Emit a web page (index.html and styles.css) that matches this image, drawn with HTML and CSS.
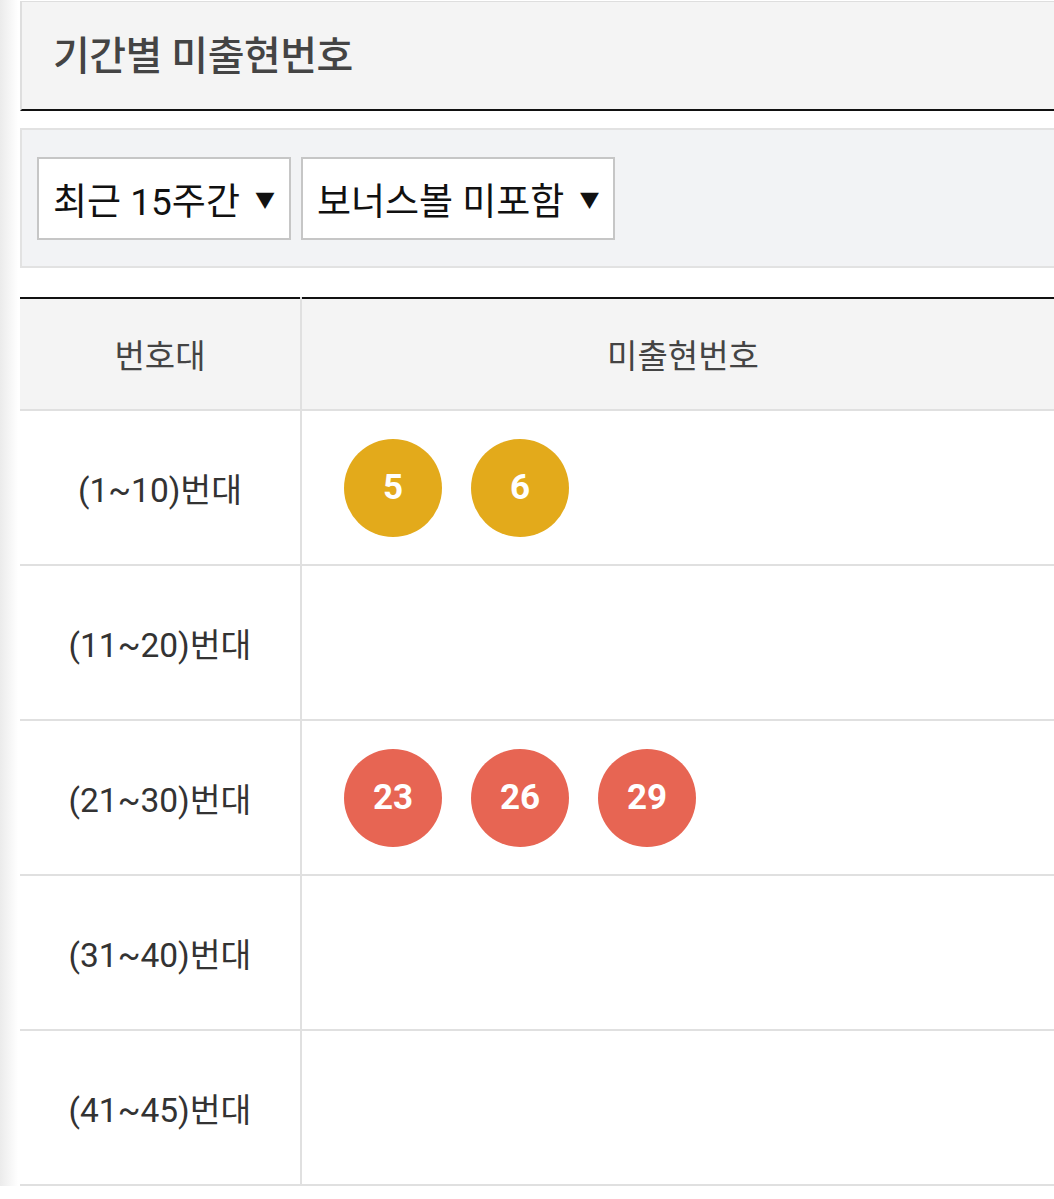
FILE: index.html
```html
<!DOCTYPE html>
<html lang="ko">
<head>
<meta charset="UTF-8">
<meta name="viewport" content="width=device-width, initial-scale=1.0">
<title>기간별 미출현번호</title>
<link rel="stylesheet" href="styles.css">
</head>
<body>

<div class="page">
    <div class="title-box">
        <h2>기간별 미출현번호</h2>
    </div>

    <!-- 기간 / 보너스볼 선택 -->
    <div class="filter-box">
        <div class="select">최근 15주간 <span class="arrow">▼</span></div>
        <div class="select">보너스볼 미포함 <span class="arrow">▼</span></div>
    </div>

    <table class="num-table">
        <tr>
            <th class="col-range">번호대</th>
            <th>미출현번호</th>
        </tr>
        <tr>
            <td class="col-range">(1~10)번대</td>
            <td class="balls">
                <div class="ball-list">
                    <span class="ball yellow">5</span>
                    <span class="ball yellow">6</span>
                </div>
            </td>
        </tr>
        <tr>
            <td class="col-range">(11~20)번대</td>
            <td class="balls"></td>
        </tr>
        <tr>
            <td class="col-range">(21~30)번대</td>
            <td class="balls">
                <div class="ball-list">
                    <span class="ball red">23</span>
                    <span class="ball red">26</span>
                    <span class="ball red">29</span>
                </div>
            </td>
        </tr>
        <tr>
            <td class="col-range">(31~40)번대</td>
            <td class="balls"></td>
        </tr>
        <tr>
            <td class="col-range">(41~45)번대</td>
            <td class="balls"></td>
        </tr>
    </table>
</div>

</body>
</html>
```

FILE: styles.css
```css
html, body {
    margin: 0;
    padding: 0;
    overflow: hidden;
}

body {
    font-family: Roboto, "Noto Sans CJK KR", sans-serif;
    background: #fff linear-gradient(to right, #ebebeb 0, #fff 18px) no-repeat;
    color: #333;
}

.page {
    margin-left: 20px;
    width: 1044px;
}

/* Title */
.title-box {
    height: 107px;
    margin-top: 1px;
    background-color: #f4f4f4;
    border-top: 1px solid #dedede;
    border-left: 2px solid #dedede;
    border-bottom: 2px solid #111;
    display: flex;
    align-items: center;
}

.title-box h2 {
    margin: 0 0 6px 31px;
    font-size: 40px;
    font-weight: 500;
    color: #444;
    letter-spacing: -0.5px;
}

/* Filters */
.filter-box {
    margin-top: 17px;
    padding: 27px 0 26px 15px;
    background-color: #f2f3f5;
    border-top: 2px solid #e2e2e2;
    border-bottom: 2px solid #e2e2e2;
    border-left: 2px solid #e2e2e2;
    display: flex;
    gap: 10px;
}

.select {
    height: 79px;
    padding: 0 14px 0 14px;
    background-color: #fff;
    border: 2px solid #c6c6c6;
    display: flex;
    align-items: center;
    gap: 15px;
    font-size: 37px;
    color: #111;
}

.select .arrow {
    font-size: 20px;
    margin-top: 2px;
}

/* Table */
.num-table {
    margin-top: 29px;
    width: 1044px;
    border-collapse: collapse;
    border-top: 2px solid #111;
}

.num-table th {
    height: 110px;
    padding: 0;
    background-color: #f4f4f4;
    font-size: 33px;
    font-weight: 400;
    color: #444;
    border-bottom: 2px solid #e0e0e0;
}

.num-table td {
    height: 153px;
    padding: 0;
    border-bottom: 2px solid #e0e0e0;
    font-size: 33.5px;
    color: #333;
    text-align: center;
}

.col-range {
    width: 280px;
    border-right: 2px solid #e0e0e0;
}

.num-table td.balls {
    text-align: left;
    padding-left: 42px;
}

.ball-list {
    display: flex;
    gap: 29px;
}

.ball {
    display: flex;
    align-items: center;
    justify-content: center;
    width: 98px;
    height: 98px;
    border-radius: 50%;
    color: #fff;
    font-size: 35px;
    font-weight: 700;
}

.ball.yellow {
    background-color: #e3aa1b;
}

.ball.red {
    background-color: #e76553;
}
```
